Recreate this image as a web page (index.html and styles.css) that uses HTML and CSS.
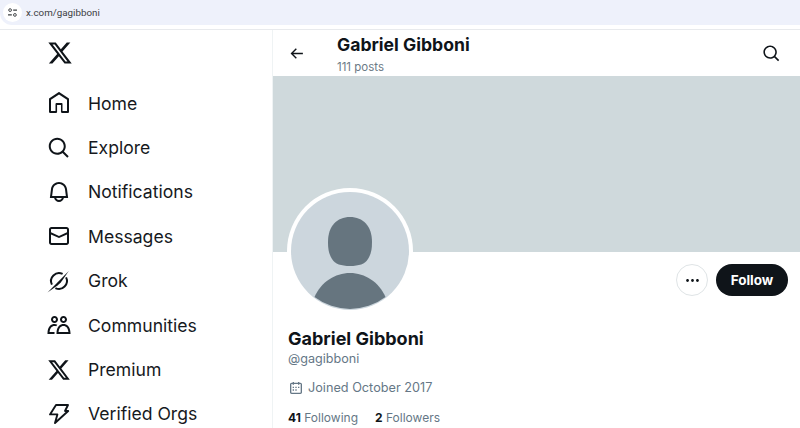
FILE: index.html
```html
<!DOCTYPE html>
<html lang="en">
<head>
<meta charset="utf-8">
<title>Gabriel Gibboni / X</title>
<link rel="stylesheet" href="styles.css">
</head>
<body>
<div class="browser-bar">
  <div class="site-pill">
    <span class="site-icon">
      <svg viewBox="0 0 16 16" class="tune"><circle cx="4.5" cy="4.5" r="2" fill="none" stroke="#3c4043" stroke-width="1.4"/><path d="M9 4.5h5.5M1.5 11.5H7" stroke="#3c4043" stroke-width="1.6" fill="none"/><circle cx="11.5" cy="11.5" r="2" fill="none" stroke="#3c4043" stroke-width="1.4"/></svg>
    </span>
    <span class="url">x.com/gagibboni</span>
  </div>
</div>
<div class="app">
  <nav class="sidebar">
    <svg class="logo" viewBox="0 0 24 24"><path d="M18.244 2.25h3.308l-7.227 8.26 8.502 11.24H16.17l-5.214-6.817L4.99 21.75H1.68l7.73-8.835L1.254 2.25H8.08l4.713 6.231zm-1.161 17.52h1.833L7.084 4.126H5.117z"/></svg>
    <ul class="nav">
      <li class="nav-item"><svg class="icon" viewBox="0 0 24 24"><path d="M21.591 7.146L12.52 1.157c-.316-.21-.724-.21-1.04 0l-9.071 5.99c-.26.173-.409.456-.409.757v13.183c0 .502.418.913.929.913H9.14c.51 0 .929-.41.929-.913v-7.075h3.909v7.075c0 .502.417.913.928.913h6.165c.511 0 .929-.41.929-.913V7.904c0-.301-.158-.584-.408-.758zM20 20l-4.5.01.011-7.097c0-.502-.418-.913-.928-.913H9.44c-.511 0-.929.41-.929.913L8.5 20H4V8.773l8.011-5.342L20 8.764z"/></svg><span>Home</span></li>
      <li class="nav-item"><svg class="icon" viewBox="0 0 24 24"><path d="M10.25 3.75c-3.59 0-6.5 2.91-6.5 6.5s2.91 6.5 6.5 6.5c1.795 0 3.419-.726 4.596-1.904 1.178-1.177 1.904-2.801 1.904-4.596 0-3.59-2.91-6.5-6.5-6.5zm-8.5 6.5c0-4.694 3.806-8.5 8.5-8.5s8.5 3.806 8.5 8.5c0 1.986-.682 3.815-1.824 5.262l4.781 4.781-1.414 1.414-4.781-4.781c-1.447 1.142-3.276 1.824-5.262 1.824-4.694 0-8.5-3.806-8.5-8.5z"/></svg><span>Explore</span></li>
      <li class="nav-item"><svg class="icon" viewBox="0 0 24 24"><path d="M19.993 9.042C19.48 5.017 16.054 2 11.996 2s-7.49 3.021-7.999 7.051L2.866 18H7.1c.463 2.282 2.481 4 4.9 4s4.437-1.718 4.9-4h4.236l-1.143-8.958zM12 20c-1.306 0-2.417-.835-2.829-2h5.658c-.412 1.165-1.523 2-2.829 2zm-6.866-4l.847-6.698C6.364 6.272 8.941 4 11.996 4s5.627 2.268 6.013 5.295L18.864 16H5.134z"/></svg><span>Notifications</span></li>
      <li class="nav-item"><svg class="icon" viewBox="0 0 24 24"><path d="M1.998 5.5c0-1.381 1.119-2.5 2.5-2.5h15c1.381 0 2.5 1.119 2.5 2.5v13c0 1.381-1.119 2.5-2.5 2.5h-15c-1.381 0-2.5-1.119-2.5-2.5v-13zm2.5-.5c-.276 0-.5.224-.5.5v2.764l8 3.638 8-3.636V5.5c0-.276-.224-.5-.5-.5h-15zm15.5 5.463l-8 3.636-8-3.638V18.5c0 .276.224.5.5.5h15c.276 0 .5-.224.5-.5v-8.037z"/></svg><span>Messages</span></li>
      <li class="nav-item"><svg class="icon" viewBox="0 0 24 24"><path d="M15.6 4.9A8 8 0 0 0 4.9 15.6M19.1 8.4A8 8 0 0 1 8.4 19.1" fill="none" stroke="#0f1419" stroke-width="2"/><path d="M0.5 23.5 21.8 2l-8 11.6-3 2.6z"/></svg><span>Grok</span></li>
      <li class="nav-item"><svg class="icon" viewBox="0 0 24 24"><path d="M7.501 19.917L7.471 21H.472l.029-1.027c.184-6.618 3.736-8.977 7-8.977.963 0 1.95.212 2.87.672-.444.478-.851 1.03-1.212 1.656-.507-.204-1.054-.329-1.658-.329-2.767 0-4.57 2.223-4.938 6.004H7.56c-.023.302-.05.599-.059.917zm15.998.056L23.528 21H9.472l.029-1.027c.184-6.618 3.736-8.977 7-8.977s6.816 2.358 7 8.977zM21.437 19c-.367-3.781-2.17-6.004-4.938-6.004s-4.57 2.223-4.938 6.004h9.875zm-4.938-9c-.799 0-1.527-.279-2.116-.73-.836-.64-1.384-1.638-1.384-2.77 0-1.93 1.567-3.5 3.5-3.5s3.5 1.57 3.5 3.5c0 1.132-.548 2.13-1.384 2.77-.589.451-1.317.73-2.116.73zm-1.5-3.5c0 .827.673 1.5 1.5 1.5s1.5-.673 1.5-1.5-.673-1.5-1.5-1.5-1.5.673-1.5 1.5zM7.5 3C9.433 3 11 4.57 11 6.5S9.433 10 7.5 10 4 8.43 4 6.5 5.567 3 7.5 3zm0 2C6.673 5 6 5.673 6 6.5S6.673 8 7.5 8 9 7.327 9 6.5 8.327 5 7.5 5z"/></svg><span>Communities</span></li>
      <li class="nav-item"><svg class="icon" viewBox="0 0 24 24"><path d="M18.244 2.25h3.308l-7.227 8.26 8.502 11.24H16.17l-5.214-6.817L4.99 21.75H1.68l7.73-8.835L1.254 2.25H8.08l4.713 6.231zm-1.161 17.52h1.833L7.084 4.126H5.117z"/></svg><span>Premium</span></li>
      <li class="nav-item"><svg class="icon" viewBox="0 0 24 24"><path d="M9 3h12l-3 6h3.2L8 21l2.4-8.6H3z" fill="none" stroke="#0f1419" stroke-width="1.9" stroke-linejoin="round"/></svg><span>Verified Orgs</span></li>
    </ul>
  </nav>
  <main class="profile">
    <header class="top">
      <svg class="back" viewBox="0 0 24 24"><path d="M7.414 13l5.043 5.04-1.414 1.42L3.586 12l7.457-7.46 1.414 1.42L7.414 11H21v2H7.414z"/></svg>
      <div class="top-text">
        <div class="top-name">Gabriel Gibboni</div>
        <div class="top-posts">111 posts</div>
      </div>
      <svg class="top-search" viewBox="0 0 24 24"><path d="M10.25 3.75c-3.59 0-6.5 2.91-6.5 6.5s2.91 6.5 6.5 6.5c1.795 0 3.419-.726 4.596-1.904 1.178-1.177 1.904-2.801 1.904-4.596 0-3.59-2.91-6.5-6.5-6.5zm-8.5 6.5c0-4.694 3.806-8.5 8.5-8.5s8.5 3.806 8.5 8.5c0 1.986-.682 3.815-1.824 5.262l4.781 4.781-1.414 1.414-4.781-4.781c-1.447 1.142-3.276 1.824-5.262 1.824-4.694 0-8.5-3.806-8.5-8.5z"/></svg>
    </header>
    <div class="banner"></div>
    <div class="actions">
      <div class="avatar">
        <svg viewBox="0 0 118 118" class="avatar-img">
          <circle cx="59" cy="59" r="59" fill="#ccd6dd"/>
          <path d="M59 25C72 25 81 34 81 50C81 58 80 62 77 67C74 72 68 74 59 74C50 74 44 72 41 67C38 62 37 58 37 50C37 34 46 25 59 25z" fill="#66757f"/>
          <path d="M23.5 105C30 90 44 81 59 81S88 90 94.500 105A59 59 0 0 1 23.500 105z" fill="#66757f"/>
        </svg>
      </div>
      <div class="buttons">
        <button class="more"><svg viewBox="0 0 24 24"><path d="M3 12c0-1.1.9-2 2-2s2 .9 2 2-.9 2-2 2-2-.9-2-2zm9 2c1.1 0 2-.9 2-2s-.9-2-2-2-2 .9-2 2 .9 2 2 2zm7 0c1.1 0 2-.9 2-2s-.9-2-2-2-2 .9-2 2 .9 2 2 2z"/></svg></button>
        <button class="follow">Follow</button>
      </div>
    </div>
    <section class="info">
      <h1 class="name">Gabriel Gibboni</h1>
      <div class="handle">@gagibboni</div>
      <div class="joined"><svg viewBox="0 0 24 24"><path d="M7 4V3h2v1h6V3h2v1h1.5C19.89 4 21 5.12 21 6.5v12c0 1.38-1.11 2.5-2.5 2.5h-13C4.12 21 3 19.88 3 18.5v-12C3 5.12 4.12 4 5.5 4H7zm0 2H5.5c-.27 0-.5.22-.5.5v12c0 .28.23.5.5.5h13c.28 0 .5-.22.5-.5v-12c0-.28-.22-.5-.5-.5H17v1h-2V6H9v1H7V6zm0 6h2v-2H7v2zm0 4h2v-2H7v2zm4-4h2v-2h-2v2zm0 4h2v-2h-2v2zm4-4h2v-2h-2v2z"/></svg><span>Joined October 2017</span></div>
      <div class="stats"><span><b>41</b> Following</span><span><b>2</b> Followers</span></div>
    </section>
  </main>
</div>
</body>
</html>
```
FILE: styles.css
```css
* { box-sizing: border-box; }
html, body { margin: 0; padding: 0; }
body {
  width: 800px;
  height: 428px;
  overflow: hidden;
  background: #fff;
  color: #0f1419;
  font-family: Inter, "Liberation Sans", sans-serif;
}
.browser-bar {
  height: 30px;
  padding-bottom: 5px;
  border-bottom: 1px solid #e8eaed;
}
.site-pill {
  height: 25px;
  background: #eef1fb;
  display: flex;
  align-items: center;
  gap: 4px;
  padding-left: 3px;
  border-bottom-left-radius: 12px;
}
.site-icon {
  width: 19px;
  height: 19px;
  border-radius: 50%;
  background: #fff;
  display: flex;
  align-items: center;
  justify-content: center;
}
.tune { width: 11px; height: 11px; }
.url { font-size: 9.8px; color: #3c4043; font-family: Roboto, sans-serif; }
.app { display: flex; height: 398px; }
.sidebar {
  width: 273px;
  flex: none;
  padding: 10px 0 0 47px;
  border-right: 1px solid #eff3f4;
}
.logo { display: block; width: 26px; height: 26px; fill: #0f1419; }
.nav { list-style: none; margin: 15px 0 0; padding: 0; }
.nav-item {
  height: 44.4px;
  display: flex;
  align-items: center;
  gap: 17px;
  font-size: 17.6px;
  color: #16191d;
}
.icon { width: 24px; height: 24px; flex: none; fill: #0f1419; }
.profile { width: 527px; flex: none; }
.top {
  height: 46px;
  display: flex;
  align-items: center;
  padding: 0 19px 0 15px;
}
.back { width: 17px; height: 17px; fill: #0f1419; }
.top-text { margin-left: 32px; flex: 1; padding-top: 6px; }
.top-name { font-size: 17.6px; font-weight: 700; line-height: 22px; margin-top: -4px; }
.top-posts { font-size: 11.5px; color: #6b7a86; line-height: 14px; margin-top: 4px; }
.top-search { width: 19px; height: 19px; fill: #0f1419; }
.banner { height: 176px; background: #cfd9dc; }
.actions {
  height: 75px;
  display: flex;
  justify-content: space-between;
  align-items: flex-start;
  padding: 12px 12px 0 14px;
}
.avatar {
  width: 126px;
  height: 126px;
  margin-top: -76px;
  border-radius: 50%;
  background: #fff;
  padding: 4px;
  flex: none;
}
.avatar-img { display: block; width: 118px; height: 118px; }
.buttons { display: flex; gap: 8px; align-items: center; }
.more {
  width: 32px;
  height: 32px;
  padding: 0;
  border: 1px solid #dfe4e6;
  border-radius: 50%;
  background: #fff;
  display: flex;
  align-items: center;
  justify-content: center;
}
.more svg { width: 17px; height: 17px; fill: #0f1419; }
.follow {
  width: 72px;
  height: 32px;
  padding: 0;
  border: 0;
  border-radius: 16px;
  background: #0f1419;
  color: #fff;
  font: 700 13.5px Inter, "Liberation Sans", sans-serif;
}
.info { padding-left: 15px; }
.name { margin: 0; font-size: 18px; font-weight: 700; line-height: 23px; }
.handle { font-size: 12.6px; color: #657786; line-height: 18px; }
.joined {
  display: flex;
  align-items: center;
  gap: 4px;
  font-size: 12.7px;
  color: #657786;
  line-height: 18px;
  margin-top: 11px;
}
.joined svg { width: 16px; height: 16px; fill: #657786; }
.stats {
  display: flex;
  gap: 17px;
  font-size: 12px;
  color: #657786;
  line-height: 18px;
  margin-top: 12px;
}
.stats b { color: #0f1419; font-weight: 700; }
```
